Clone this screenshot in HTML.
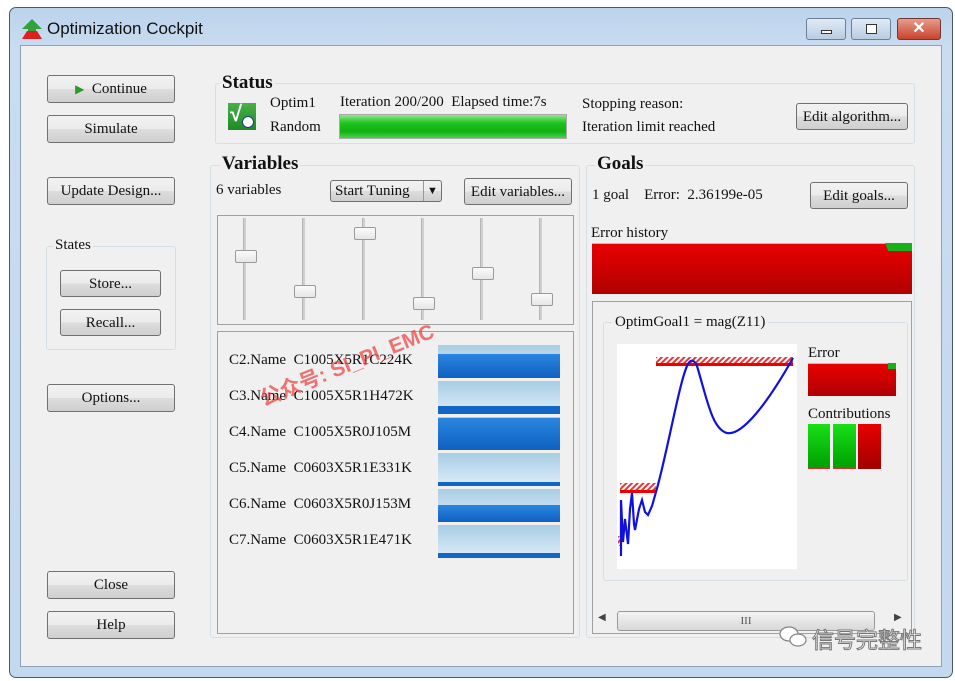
<!DOCTYPE html>
<html><head><meta charset="utf-8"><style>
*{box-sizing:border-box;margin:0;padding:0}
body{width:955px;height:681px;background:#fff;position:relative;overflow:hidden;font-family:"Liberation Serif",serif;font-size:15px;color:#111}
.a{position:absolute}
.frame{left:9px;top:7px;width:944px;height:671px;border:1px solid #4a5a6a;border-radius:7px;background:linear-gradient(#bcd3ec,#c9dcf0 40px,#c4d8ee);}
.client{left:20px;top:45px;width:922px;height:622px;background:#f0f0f0;border:1px solid #8da2b8}
.btn{position:absolute;border:1px solid #707070;border-radius:3px;background:linear-gradient(#f2f2f2,#ebebeb 50%,#dddddd 51%,#cfcfcf);text-align:center;font-size:15px;line-height:26px}
.grp{position:absolute;border:1px solid #d5dfe5;border-radius:3px}
.ttl{position:absolute;font-weight:bold;font-size:19px;background:#f0f0f0;padding:0 2px;line-height:20px}
.box{position:absolute;border:1px solid #a0a0a0}
.track{position:absolute;width:3px;background:#cfcfcf;border-left:1px solid #b5b5b5}
.thumb{position:absolute;width:22px;height:13px;border:1px solid #9a9a9a;border-radius:2px;background:linear-gradient(#fafafa,#e6e6e6)}
.lbl{position:absolute;font-size:15px;white-space:nowrap}
.bar{position:absolute;left:438px;width:122px;height:33px;background:linear-gradient(#a9cde5,#dcedf8)}
</style></head><body>
<div class="a frame"></div>
<!-- title -->
<svg class="a" style="left:21px;top:18px" width="22" height="22" viewBox="0 0 22 22"><polygon points="11,1 21,11 15,11 15,13 7,13 7,11 1,11" fill="#2ea43a"/><polygon points="6,13 16,13 21,21 1,21" fill="#e02020"/></svg>
<div class="lbl" style="left:47px;top:19px;font-family:'Liberation Sans',sans-serif;font-size:17px;color:#111">Optimization Cockpit</div>
<div class="a" style="left:806px;top:18px;width:40px;height:22px;border:1px solid #6b7f95;border-radius:3px;background:linear-gradient(#e0ebf6,#b9cce1)"><div class="a" style="left:14px;top:11px;width:11px;height:4px;background:#fff;border:1px solid #333"></div></div>
<div class="a" style="left:851px;top:18px;width:40px;height:22px;border:1px solid #6b7f95;border-radius:3px;background:linear-gradient(#e0ebf6,#b9cce1)"><div class="a" style="left:14px;top:5px;width:11px;height:10px;background:#fff;border:1px solid #333"></div></div>
<div class="a" style="left:897px;top:18px;width:44px;height:22px;border:1px solid #6b3b33;border-radius:3px;background:linear-gradient(#e89c8c,#c9432c);color:#fff;font:bold 16px 'Liberation Sans',sans-serif;text-align:center;line-height:20px">✕</div>
<div class="a client"></div>
<!-- left buttons -->
<div class="btn" style="left:47px;top:75px;width:128px;height:28px"><span style="color:#2a9b2a;font-size:12px">▶</span>&nbsp; Continue</div>
<div class="btn" style="left:47px;top:115px;width:128px;height:28px">Simulate</div>
<div class="btn" style="left:47px;top:177px;width:128px;height:28px">Update Design...</div>
<div class="grp" style="left:46px;top:246px;width:130px;height:104px"></div>
<div class="lbl" style="left:53px;top:237px;background:#f0f0f0;padding:0 2px">States</div>
<div class="btn" style="left:60px;top:270px;width:101px;height:27px">Store...</div>
<div class="btn" style="left:60px;top:309px;width:101px;height:27px">Recall...</div>
<div class="btn" style="left:47px;top:384px;width:128px;height:28px">Options...</div>
<div class="btn" style="left:47px;top:571px;width:128px;height:28px">Close</div>
<div class="btn" style="left:47px;top:611px;width:128px;height:28px">Help</div>
<!-- status -->
<div class="grp" style="left:215px;top:83px;width:700px;height:61px"></div>
<div class="ttl" style="left:220px;top:73px">Status</div>
<div class="a" style="left:228px;top:103px;width:28px;height:27px;background:linear-gradient(#47b048,#1f8a26)"></div>
<div class="lbl" style="left:230px;top:101px;color:#fff;font:bold 22px 'Liberation Sans',sans-serif">√</div>
<div class="a" style="left:242px;top:116px;width:12px;height:12px;border-radius:50%;background:#fff;border:1px solid #223a8a"></div>
<div class="lbl" style="left:270px;top:95px">Optim1</div>
<div class="lbl" style="left:270px;top:119px">Random</div>
<div class="lbl" style="left:340px;top:94px">Iteration 200/200 &nbsp;Elapsed time:7s</div>
<div class="a" style="left:339px;top:114px;width:228px;height:25px;border:1px solid #aaa;background:linear-gradient(#8fe68f,#1fc41f 35%,#10b010 70%,#4ad04a)"></div>
<div class="lbl" style="left:582px;top:96px">Stopping reason:</div>
<div class="lbl" style="left:582px;top:119px">Iteration limit reached</div>
<div class="btn" style="left:796px;top:103px;width:112px;height:27px">Edit algorithm...</div>
<!-- variables -->
<div class="grp" style="left:210px;top:165px;width:370px;height:473px"></div>
<div class="ttl" style="left:220px;top:154px">Variables</div>
<div class="lbl" style="left:216px;top:182px">6 variables</div>
<div class="btn" style="left:330px;top:180px;width:112px;height:22px;line-height:20px;text-align:left;padding-left:4px">Start Tuning <span class="a" style="right:0;top:0;width:18px;height:20px;border-left:1px solid #999;font-size:11px;text-align:center">▼</span></div>
<div class="btn" style="left:464px;top:178px;width:108px;height:27px">Edit variables...</div>
<div class="box" style="left:217px;top:215px;width:357px;height:110px"></div>
<div class="track" style="left:243px;top:218px;height:102px"></div>
<div class="track" style="left:302px;top:218px;height:102px"></div>
<div class="track" style="left:362px;top:218px;height:102px"></div>
<div class="track" style="left:421px;top:218px;height:102px"></div>
<div class="track" style="left:480px;top:218px;height:102px"></div>
<div class="track" style="left:539px;top:218px;height:102px"></div>
<div class="thumb" style="left:235px;top:250px"></div>
<div class="thumb" style="left:294px;top:285px"></div>
<div class="thumb" style="left:354px;top:227px"></div>
<div class="thumb" style="left:413px;top:297px"></div>
<div class="thumb" style="left:472px;top:267px"></div>
<div class="thumb" style="left:531px;top:293px"></div>
<div class="box" style="left:217px;top:331px;width:357px;height:303px"></div>
<div class="lbl" style="left:229px;top:352px">C2.Name &nbsp;C1005X5R1C224K</div>
<div class="lbl" style="left:229px;top:388px">C3.Name &nbsp;C1005X5R1H472K</div>
<div class="lbl" style="left:229px;top:424px">C4.Name &nbsp;C1005X5R0J105M</div>
<div class="lbl" style="left:229px;top:460px">C5.Name &nbsp;C0603X5R1E331K</div>
<div class="lbl" style="left:229px;top:496px">C6.Name &nbsp;C0603X5R0J153M</div>
<div class="lbl" style="left:229px;top:532px">C7.Name &nbsp;C0603X5R1E471K</div>
<div class="bar" style="top:345px"><div class="a" style="left:0;right:0;bottom:0;height:24px;background:linear-gradient(#2a86e0,#1060c0)"></div></div>
<div class="bar" style="top:381px"><div class="a" style="left:0;right:0;bottom:0;height:8px;background:#1466c6"></div></div>
<div class="bar" style="top:417px"><div class="a" style="left:0;right:0;bottom:0;height:32px;background:linear-gradient(#2a86e0,#1060c0)"></div></div>
<div class="bar" style="top:453px"><div class="a" style="left:0;right:0;bottom:0;height:4px;background:#1466c6"></div></div>
<div class="bar" style="top:489px"><div class="a" style="left:0;right:0;bottom:0;height:17px;background:linear-gradient(#2a86e0,#1060c0)"></div></div>
<div class="bar" style="top:525px"><div class="a" style="left:0;right:0;bottom:0;height:5px;background:#1466c6"></div></div>
<div class="lbl" style="left:255px;top:385px;color:rgba(235,60,60,0.7);font:bold 21px 'Liberation Sans','Noto Sans CJK SC',sans-serif;transform:rotate(-22deg);transform-origin:left top">公众号: SI_PI_EMC</div>
<!-- goals -->
<div class="grp" style="left:586px;top:165px;width:329px;height:473px"></div>
<div class="ttl" style="left:595px;top:154px">Goals</div>
<div class="lbl" style="left:592px;top:187px">1 goal &nbsp;&nbsp;&nbsp;Error: &nbsp;2.36199e-05</div>
<div class="btn" style="left:810px;top:182px;width:98px;height:27px">Edit goals...</div>
<div class="lbl" style="left:591px;top:225px">Error history</div>
<div class="a" style="left:592px;top:243px;width:320px;height:51px;background:linear-gradient(#e80000,#b00000);border-top:1px solid #e0c040"></div>
<div class="a" style="left:885px;top:243px;width:27px;height:8px;background:#18b018;clip-path:polygon(0 0,100% 0,100% 100%,12% 100%)"></div>
<div class="box" style="left:592px;top:301px;width:320px;height:333px"></div>
<div class="grp" style="left:603px;top:322px;width:305px;height:259px"></div>
<div class="lbl" style="left:612px;top:314px;background:#f0f0f0;padding:0 3px">OptimGoal1 = mag(Z11)</div>
<svg class="a" style="left:617px;top:344px" width="180" height="225" viewBox="0 0 180 225">
<defs><pattern id="h" width="4" height="4" patternUnits="userSpaceOnUse" patternTransform="rotate(45)"><rect width="2" height="4" fill="#e33"/></pattern></defs>
<rect width="180" height="225" fill="#fff"/>
<rect x="39" y="13" width="137" height="7" fill="url(#h)"/><rect x="39" y="19" width="137" height="3" fill="#e00"/>
<rect x="3" y="139" width="36" height="7" fill="url(#h)"/><rect x="3" y="146" width="36" height="3" fill="#e00"/>
<rect x="1" y="192" width="4" height="10" fill="url(#h)"/>
<path d="M4,212 L4,156 L6,198 L8,175 L11,200 L13,165 L15,149 L17,180 L18,186 L22,165 L25,156 L28,168 L31,171 L35,162 L39,148 C50,110 62,40 70,22 C73,15 77,15 80,22 C90,55 95,85 110,89 C125,92 150,60 176,14" fill="none" stroke="#1010e0" stroke-width="2.2"/>
</svg>
<div class="lbl" style="left:808px;top:345px">Error</div>
<div class="a" style="left:808px;top:363px;width:88px;height:33px;background:linear-gradient(#e80000,#b00000);border-top:1px solid #e0c040"></div>
<div class="a" style="left:888px;top:363px;width:8px;height:6px;background:#18b018"></div>
<div class="lbl" style="left:808px;top:406px">Contributions</div>
<div class="a" style="left:808px;top:424px;width:22px;height:45px;background:linear-gradient(#18e018,#00a000);border-bottom:2px solid #c33"></div>
<div class="a" style="left:833px;top:424px;width:23px;height:45px;background:linear-gradient(#18e018,#00a000);border-bottom:2px solid #c33"></div>
<div class="a" style="left:858px;top:424px;width:23px;height:45px;background:linear-gradient(#e80000,#a00000)"></div>
<div class="a" style="left:593px;top:610px;width:318px;height:22px;background:#f0f0f0"></div>
<div class="lbl" style="left:598px;top:612px;font-size:10px;color:#444">◀</div>
<div class="a" style="left:617px;top:611px;width:258px;height:20px;border:1px solid #999;border-radius:3px;background:linear-gradient(#f4f4f4,#d8d8d8);text-align:center;font-size:11px;line-height:18px;color:#555">III</div>
<div class="lbl" style="left:894px;top:612px;font-size:10px;color:#444">▶</div>
<!-- watermark -->
<svg class="a" style="left:778px;top:624px" width="30" height="26" viewBox="0 0 30 26"><ellipse cx="11" cy="10" rx="9" ry="7" fill="#fff" stroke="#888" stroke-width="1.3"/><ellipse cx="20" cy="16" rx="8" ry="6" fill="#fff" stroke="#888" stroke-width="1.3"/></svg>
<div class="lbl" style="left:812px;top:623px;font:22px 'Noto Sans CJK SC',sans-serif;color:#fff;-webkit-text-stroke:1px #777">信号完整性</div>
</body></html>
